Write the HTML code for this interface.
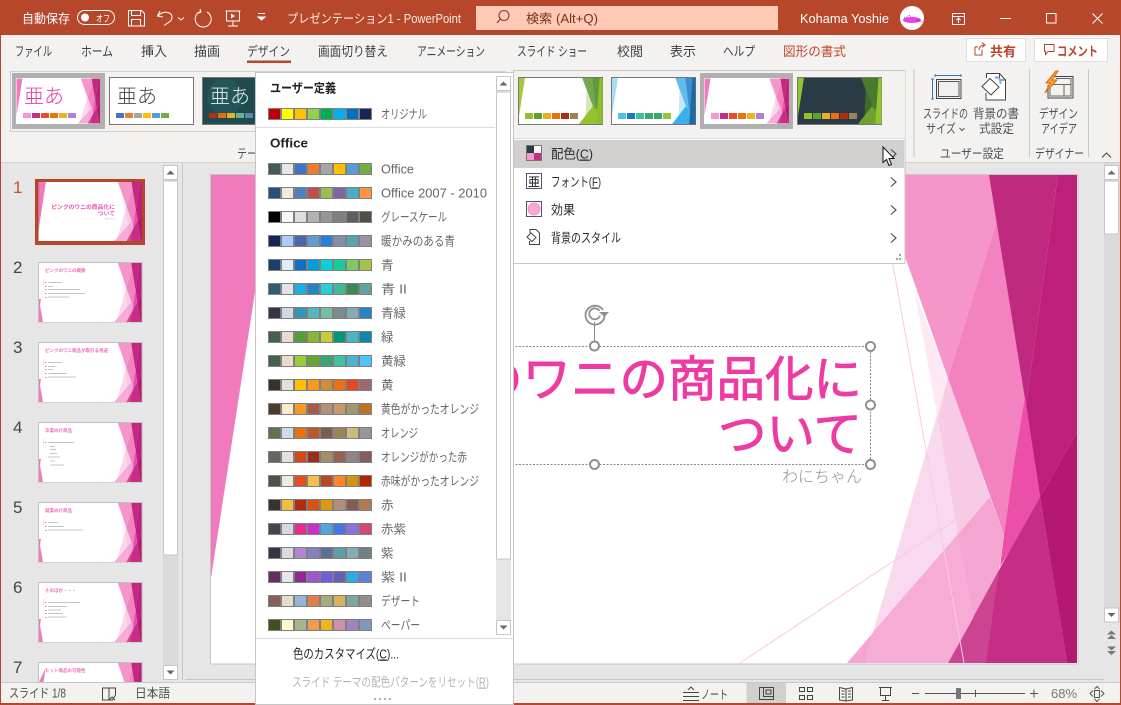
<!DOCTYPE html>
<html lang="ja">
<head>
<meta charset="utf-8">
<title>PowerPoint</title>
<style>
html,body{margin:0;padding:0;background:#E6E6E6;width:1121px;height:705px;overflow:hidden}
svg{display:block;font-family:"Liberation Sans","Noto Sans CJK JP",sans-serif}
.s rect{width:11px;height:10px}
.l{font-size:12.5px;fill:#666}
.w{font-size:12.5px;fill:#fff}
.tb{font-size:13px;fill:#404040}
.r{font-size:12.5px;fill:#505050}
.m{font-size:13px;fill:#2a2a2a}
.n{font-size:17px;fill:#444}
.i{fill:none;stroke:#444;stroke-width:1}
.wi{fill:none;stroke:#fff;stroke-width:1}
.g{fill:#fff;stroke:#c6c6c6}
</style>
</head>
<body>
<svg width="1121" height="705" viewBox="0 0 1121 705" xmlns="http://www.w3.org/2000/svg">
<defs>
<g id="d">
<rect x="211" y="175" width="866" height="488" fill="#fff"/>
<polygon points="211,175 273,175 211,578" fill="#F179BD"/>
<polygon points="915,293 948,378 938,420" fill="#FDE8F4"/>
<polygon points="948,378 990,497 873,632" fill="#F8D9EE"/>
<polygon points="948,378 990,497 958,534 938,420" fill="#F8CBE5"/>
<polygon points="876,175 989,175 997,220 948,378" fill="#F595CA"/>
<polygon points="997,220 1025,397 1022,420 1013,470 1004,535 948,378" fill="#F283C0"/>
<polygon points="1058,175 1077,175 1077,432 1040,497 1026,405" fill="#BE1F7A"/>
<polygon points="989,175 1058,175 1026,405" fill="#BF2A7E"/>
<polygon points="1025,397 1040,497 1010,550 1000,567 1004,535 1013,470" fill="#EC4FA8"/>
<polygon points="1040,497 1067,663 948,663 1010,550" fill="#C62D85"/>
<polygon points="1077,432 1077,663 1067,663 1040,497" fill="#B51871"/>
<polygon points="948,663 986,663 999,570" fill="#CB4391"/>
<polygon points="847,663 948,663 999,570 1004,535 990,497" fill="#F5A5D1"/>
<polygon points="864,663 873,632 958,534 973.500,617.500 948,663" fill="#F6ACD5"/>
<path d="M877 175L964 663M740 663L990 497" stroke="#F9C9E4" stroke-width="1" fill="none"/>
</g>
<g id="md">
<polygon points="0,0 62,0 0,403" style="fill:var(--s)"/>
<polygon points="655,0 866,0 866,488 623,488 765,300" style="fill:var(--l)"/>
<polygon points="700,130 765,300 690,400" style="fill:var(--p)"/>
<polygon points="760,0 866,0 866,210 800,340" style="fill:var(--d)"/>
<polygon points="623,488 866,488 866,210 800,340 765,300" style="fill:var(--e)"/>
<polygon points="835,0 866,0 866,488 800,488" style="fill:var(--f)"/>
</g>
</defs>

<!-- base -->
<rect width="1121" height="705" fill="#B7472A"/>
<rect x="1" y="35" width="1119" height="668" fill="#E6E6E6"/>

<!-- slide -->
<rect x="210.500" y="174.500" width="867.500" height="489.500" fill="#fff" stroke="#c6c6c6"/>
<use href="#d"/>
<text x="862" y="396" text-anchor="end" font-size="48.500" fill="#EE3BA3" stroke="#EE3BA3" stroke-width=".9">ピンクのワニの商品化に</text>
<text x="862" y="451" text-anchor="end" font-size="48.500" fill="#EE3BA3" stroke="#EE3BA3" stroke-width=".9">ついて</text>
<text x="862" y="482" text-anchor="end" font-size="16" font-weight="300" fill="#909090" textLength="80" lengthAdjust="spacingAndGlyphs">わにちゃん</text>
<!-- selection -->
<path d="M400 346.500H870.500V464.500H400" fill="none" stroke="#888" stroke-dasharray="2 1.500"/>
<path d="M594.500 322V341" stroke="#888"/>
<g fill="#fff" stroke="#8f8f8f" stroke-width="2">
<circle cx="594.500" cy="346" r="4.500"/><circle cx="870.500" cy="346.500" r="4.500"/><circle cx="870.500" cy="405" r="4.500"/><circle cx="594.500" cy="464.500" r="4.500"/><circle cx="870.500" cy="464.500" r="4.500"/>
</g>
<g fill="none" stroke="#8f8f8f" stroke-width="1.800"><path d="M603 310a9.500 9.500 0 1 0 1.500 6"/><path d="M599.500 311a5.500 5.500 0 1 0 .5 4.500"/></g>
<path d="M599 312h10l-4.500 5z" fill="#8f8f8f"/>

<!-- thumbnail pane -->
<rect x="35" y="179" width="110" height="66" fill="#B7472A"/>
<rect x="38.500" y="182" width="103.500" height="59" fill="#fff"/>
<use href="#d" transform="translate(38.500 182) scale(.1195 .1209) translate(-211 -175)"/>
<text x="115" y="209" text-anchor="end" font-size="5.800" font-weight="700" fill="#EF55AC">ピンクのワニの商品化に</text>
<text x="115" y="215.500" text-anchor="end" font-size="5.800" font-weight="700" fill="#EF55AC">ついて</text>
<text x="115" y="219.500" text-anchor="end" font-size="2" fill="#999">わにちゃん</text>
<text x="13" y="193" class="n" style="fill:#C8502E">1</text>

<g stroke="#c0c0c0" fill="#fff">
<rect x="38.500" y="262.500" width="103.500" height="59.500"/>
<rect x="38.500" y="342.500" width="103.500" height="59.500"/>
<rect x="38.500" y="422.500" width="103.500" height="59.500"/>
<rect x="38.500" y="502.500" width="103.500" height="59.500"/>
<rect x="38.500" y="582.500" width="103.500" height="59.500"/>
<rect x="38.500" y="662.500" width="103.500" height="59.500"/>
</g>
<use href="#d" transform="translate(39 263) scale(.1185 .1209) translate(-211 -175)"/>
<use href="#d" transform="translate(39 343) scale(.1185 .1209) translate(-211 -175)"/>
<use href="#d" transform="translate(39 423) scale(.1185 .1209) translate(-211 -175)"/>
<use href="#d" transform="translate(39 503) scale(.1185 .1209) translate(-211 -175)"/>
<use href="#d" transform="translate(39 583) scale(.1185 .1209) translate(-211 -175)"/>
<use href="#d" transform="translate(39 663) scale(.1185 .1209) translate(-211 -175)"/>
<g fill="#fff">
<polygon points="39,263 48,263 39,298"/>
<polygon points="39,343 48,343 39,378"/>
<polygon points="39,423 48,423 39,458"/>
<polygon points="39,503 48,503 39,538"/>
<polygon points="39,583 48,583 39,618"/>
<polygon points="39,663 48,663 39,682"/>
<rect x="39" y="263" width="4" height="36"/><rect x="39" y="343" width="4" height="36"/><rect x="39" y="423" width="4" height="36"/><rect x="39" y="503" width="4" height="36"/><rect x="39" y="583" width="4" height="36"/>
</g>
<g fill="#F179BD">
<polygon points="39,322 43,322 39,300"/><polygon points="39,402 43,402 39,380"/><polygon points="39,482 43,482 39,460"/><polygon points="39,562 43,562 39,540"/><polygon points="39,642 43,642 39,620"/>
</g>
<g font-size="4.500" font-weight="700" fill="#EF6DB8">
<text x="45" y="272">ピンクのワニの概要</text>
<text x="45" y="352">ピンクのワニ商品が取引る用途</text>
<text x="45" y="432">卒業向け商品</text>
<text x="45" y="512">就業向け商品</text>
<text x="45" y="592">そのほか・・・</text>
<text x="45" y="672">ヒット商品の可能性</text>
</g>
<g stroke="#c4c4ce" stroke-width="1">
<path d="M48 282.500h14M48 286.500h5M48 289.500h32M48 293.500h37M48 297h21"/>
<path d="M48 362.500h14M48 366.500h7M48 369.500h5M48 373.500h19M48 377h28"/>
<path d="M48 442.500h26M50 446.500h5M50 449.500h6M50 453.500h7M48 457h12M50 461h5M50 465h14"/>
<path d="M48 522.500h10M48 526.500h16M48 530h35"/>
<path d="M48 602.500h32M48 606.500h19M48 610h13M48 613.500h15M48 617h18"/>
</g>
<g fill="#EF6DB8"><rect x="45" y="282" width="1.500" height="1"/><rect x="45" y="286" width="1.500" height="1"/><rect x="45" y="289" width="1.500" height="1"/><rect x="45" y="293" width="1.500" height="1"/><rect x="45" y="297" width="1.500" height="1"/><rect x="45" y="362" width="1.500" height="1"/><rect x="45" y="366" width="1.500" height="1"/><rect x="45" y="369" width="1.500" height="1"/><rect x="45" y="373" width="1.500" height="1"/><rect x="45" y="377" width="1.500" height="1"/><rect x="45" y="442" width="1.500" height="1"/><rect x="45" y="522" width="1.500" height="1"/><rect x="45" y="526" width="1.500" height="1"/><rect x="45" y="530" width="1.500" height="1"/><rect x="45" y="602" width="1.500" height="1"/><rect x="45" y="606" width="1.500" height="1"/><rect x="45" y="610" width="1.500" height="1"/><rect x="45" y="613" width="1.500" height="1"/><rect x="45" y="617" width="1.500" height="1"/></g>
<text x="13" y="273" class="n">2</text><text x="13" y="353" class="n">3</text><text x="13" y="433" class="n">4</text><text x="13" y="513" class="n">5</text><text x="13" y="593" class="n">6</text><text x="13" y="673" class="n">7</text>

<!-- left scrollbar -->
<rect x="163" y="165" width="15" height="515" fill="#DADADA"/>
<rect x="163.500" y="165.500" width="14" height="14" class="g"/>
<rect x="163.500" y="181" width="14" height="374" class="g"/>
<rect x="163.500" y="665.500" width="14" height="14" class="g"/>
<path d="M166.500 174.500h8l-4-4z" fill="#666"/><path d="M166.500 670.500h8l-4 4z" fill="#666"/>
<path d="M182.500 163V680" stroke="#c6c6c6"/>
<path d="M185 679.500H1104" stroke="#c6c6c6"/>

<!-- right scrollbar -->
<rect x="1104" y="163" width="16" height="459" fill="#DADADA"/>
<rect x="1104.500" y="165.500" width="14" height="14" class="g"/>
<rect x="1104.500" y="181" width="14" height="53" class="g"/>
<rect x="1104.500" y="608" width="14" height="14" class="g"/>
<path d="M1107.500 174.500h8l-4-4z" fill="#666"/><path d="M1107.500 613h8l-4 4z" fill="#666"/>
<path d="M1107 634.500h9l-4.500-4zM1107 639h9l-4.500-4z" fill="#777"/>
<path d="M1107 646.500l4.500 4 4.500-4zM1107 651l4.500 4 4.500-4z" fill="#777"/>

<!-- ribbon -->
<rect x="1" y="35" width="1119" height="127" fill="#F3F2F1"/>
<path d="M1 162.500H1120" stroke="#d2d2d2"/>
<rect x="0" y="0" width="1121" height="35" fill="#B7472A"/>

<!-- title bar -->
<text x="22" y="23" class="w" textLength="48" lengthAdjust="spacingAndGlyphs">自動保存</text>
<rect x="77.500" y="10.500" width="37" height="14" rx="7" fill="none" stroke="#fff"/>
<circle cx="85" cy="17.500" r="4" fill="#fff"/>
<text x="96" y="22" font-size="9.500" fill="#fff" textLength="14" lengthAdjust="spacingAndGlyphs">オフ</text>
<g class="wi">
<path d="M128.500 10.500h13l3 3v12.500h-16zM131.500 10.500v5h9v-5M131.500 26v-6.500h9v6.500"/>
<path d="M160 11l-2.500 5 5.500 1M158 16.500C161 10.500 172 11 172 17c0 4-4 6-8 8.500"/>
<path d="M207 12a8 8 0 1 1-6.500-.5M200 9l1 3-3 1"/>
<path d="M225.500 11h15M226.500 11v10h13V11M233 21v5M228 26h10"/>
</g>
<path d="M231 13.500l4 2.500-4 2.500z" fill="#fff"/>
<path d="M178 17.500l3 2.500 3-2.500" class="wi"/>
<path d="M258 13.500h7M258 17l3.500 3 3.500-3z" fill="#fff" stroke="#fff" stroke-width="1"/>
<text x="287" y="23" class="w" textLength="174" lengthAdjust="spacingAndGlyphs" style="fill:#FBEAE4">プレゼンテーション1  -  PowerPoint</text>
<rect x="476" y="6" width="302" height="24" fill="#FFC9B5"/>
<circle cx="504" cy="15.500" r="5" fill="none" stroke="#8A3A20" stroke-width="1.100"/>
<path d="M500.500 19l-3.500 4" stroke="#8A3A20" stroke-width="1.200"/>
<text x="526" y="23" font-size="12.500" fill="#7B3019" textLength="72" lengthAdjust="spacingAndGlyphs">検索 (Alt+Q)</text>
<text x="800" y="23" class="w" textLength="89" lengthAdjust="spacingAndGlyphs">Kohama Yoshie</text>
<circle cx="912" cy="18" r="12" fill="#fff"/>
<ellipse cx="912" cy="20" rx="9" ry="3" fill="#F03CE8"/>
<path d="M904 18l3-1 2-2 2 2M917 20l6 2" stroke="#333" stroke-width=".7" stroke-dasharray="1 1" fill="none"/>
<g class="wi">
<rect x="952.500" y="13.500" width="12" height="11"/><path d="M952.500 16.500h12M958.500 23v-5M956.500 20l2-2 2 2"/>
<path d="M1000 18.500h11"/>
<rect x="1046.500" y="13.500" width="9.500" height="9.500"/>
<path d="M1092.500 13.500l10 10M1102.500 13.500l-10 10"/>
</g>

<!-- tabs -->
<g>
<text x="15" y="56" class="tb" textLength="37" lengthAdjust="spacingAndGlyphs">ファイル</text>
<text x="81" y="56" class="tb" textLength="32" lengthAdjust="spacingAndGlyphs">ホーム</text>
<text x="141" y="56" class="tb" textLength="26" lengthAdjust="spacingAndGlyphs">挿入</text>
<text x="194" y="56" class="tb" textLength="26" lengthAdjust="spacingAndGlyphs">描画</text>
<text x="247" y="56" class="tb" textLength="43" lengthAdjust="spacingAndGlyphs">デザイン</text>
<text x="318" y="56" class="tb" textLength="70" lengthAdjust="spacingAndGlyphs">画面切り替え</text>
<text x="417" y="56" class="tb" textLength="68" lengthAdjust="spacingAndGlyphs">アニメーション</text>
<text x="517" y="56" class="tb" textLength="70" lengthAdjust="spacingAndGlyphs">スライド ショー</text>
<text x="617" y="56" class="tb" textLength="26" lengthAdjust="spacingAndGlyphs">校閲</text>
<text x="670" y="56" class="tb" textLength="26" lengthAdjust="spacingAndGlyphs">表示</text>
<text x="723" y="56" class="tb" textLength="32" lengthAdjust="spacingAndGlyphs">ヘルプ</text>
<text x="783" y="56" class="tb" style="fill:#C0492C" textLength="63" lengthAdjust="spacingAndGlyphs">図形の書式</text>
</g>
<rect x="247" y="60.500" width="44" height="2.500" fill="#B7472A"/>
<rect x="966.500" y="38.500" width="59" height="23" fill="#fff" stroke="#E1DFDD"/>
<rect x="1034.500" y="38.500" width="73" height="23" fill="#fff" stroke="#E1DFDD"/>
<path d="M982 49.500v5.500h-7v-8h3M979 50c0-3 2-5 5-5M982 42.500l3 2.500-3 2.500" fill="none" stroke="#B7472A"/>
<path d="M1044.500 44.500h9.500v7h-6l-2.500 3v-3h-1z" fill="none" stroke="#B7472A"/>
<text x="990" y="56" font-size="13" font-weight="700" fill="#B7472A" textLength="26" lengthAdjust="spacingAndGlyphs">共有</text>
<text x="1057" y="56" font-size="13" font-weight="700" fill="#B7472A" textLength="41" lengthAdjust="spacingAndGlyphs">コメント</text>

<!-- gallery left -->
<path d="M10.500 131.500V71.500H506" fill="none" stroke="#d0d0d0"/><path d="M10.500 131.500H256" stroke="#d0d0d0"/>
<rect x="12" y="73" width="93" height="56" fill="#B0B0B0"/>
<rect x="16" y="78" width="84" height="46" fill="#fff"/>
<use href="#d" transform="translate(16.500 78.500) scale(.0965 .0922) translate(-211 -175)"/>
<text x="24" y="103" font-size="20" font-weight="300" fill="#EE3BA3">亜あ</text>
<g transform="translate(23 113)"><rect width="8" height="5" fill="#F598CE"/><rect x="9" width="8" height="5" fill="#C2307E"/><rect x="18" width="8" height="5" fill="#E84E2B"/><rect x="27" width="8" height="5" fill="#E8750F"/><rect x="36" width="8" height="5" fill="#E9B323"/><rect x="45" width="8" height="5" fill="#B180D0"/></g>
<rect x="109.500" y="77.500" width="84" height="47" fill="#fff" stroke="#777"/>
<text x="117" y="103" font-size="20" font-weight="300" fill="#444">亜あ</text>
<g transform="translate(116 113)"><rect width="8" height="5" fill="#4472C4"/><rect x="9" width="8" height="5" fill="#ED7D31"/><rect x="18" width="8" height="5" fill="#A5A5A5"/><rect x="27" width="8" height="5" fill="#FFC000"/><rect x="36" width="8" height="5" fill="#5B9BD5"/><rect x="45" width="8" height="5" fill="#70AD47"/></g>
<rect x="202.500" y="77.500" width="60" height="47" fill="#1F4A50" stroke="#777"/>
<circle cx="225" cy="97" r="18" fill="#24555A"/>
<text x="210" y="103" font-size="20" font-weight="300" fill="#E6EEEE">亜あ</text>
<g transform="translate(209 113)"><rect width="8" height="5" fill="#B53210"/><rect x="9" width="8" height="5" fill="#E07010"/><rect x="18" width="8" height="5" fill="#E8B020"/><rect x="27" width="8" height="5" fill="#70B090"/><rect x="36" width="8" height="5" fill="#5A8AA0"/></g>
<text x="237" y="158" class="r" textLength="30" lengthAdjust="spacingAndGlyphs">テーマ</text>

<!-- right ribbon groups -->
<path d="M914 69v88M1029.500 69v88M1088.500 69v88" stroke="#c8c8c8"/>
<path d="M935 75.500h26M935 74v3M961 74v3M932.500 79v20M931 79h3M931 99h3" stroke="#2B79C2" fill="none"/>
<rect x="936.500" y="79.500" width="24.500" height="19" fill="#F3F2F1" stroke="#444"/>
<rect x="938.500" y="81.500" width="20.500" height="15" fill="#F0F0F0" stroke="#555"/>
<path d="M986.500 78V73.500h13l6 6.500v20h-19.500V93" fill="#fff" stroke="#444"/><path d="M999.500 73.500v6.500h6" fill="none" stroke="#444"/>
<path d="M990 78.500l9 8.500-8 8-9-8.500z" fill="#fff" stroke="#444"/>
<path d="M995 78c3-2 6 1 5.500 6" fill="none" stroke="#7EAEE0" stroke-width="2"/>
<path d="M1054 76.500h19v21.500h-25V85" fill="none" stroke="#444"/><path d="M1056 78.500h15v17.500h-21V85" fill="none" stroke="#666"/><path d="M1051 84.500h20M1064 84.500v11.500" stroke="#666"/>
<path d="M1056 71l-10 12h4l-5 10 12-13h-5l6-9z" fill="#F9A23A" stroke="#DE6B0B"/>
<text x="923" y="118" class="r" textLength="45" lengthAdjust="spacingAndGlyphs">スライドの</text>
<text x="926" y="133" class="r" textLength="30" lengthAdjust="spacingAndGlyphs">サイズ</text>
<path d="M959.500 128l2.500 2.500 2.500-2.500" fill="none" stroke="#555"/>
<text x="973" y="118" class="r" textLength="46" lengthAdjust="spacingAndGlyphs">背景の書</text>
<text x="979" y="133" class="r" textLength="35" lengthAdjust="spacingAndGlyphs">式設定</text>
<text x="1039" y="118" class="r" textLength="39" lengthAdjust="spacingAndGlyphs">デザイン</text>
<text x="1041" y="133" class="r" textLength="36" lengthAdjust="spacingAndGlyphs">アイデア</text>
<text x="940" y="158" class="r" textLength="64" lengthAdjust="spacingAndGlyphs">ユーザー設定</text>
<text x="1035" y="158" class="r" textLength="49" lengthAdjust="spacingAndGlyphs">デザイナー</text>
<path d="M1102 157.500l4.500-4.500 4.500 4.500" fill="none" stroke="#444"/>

<!-- theme menu panel -->
<rect x="513.500" y="70.500" width="391.500" height="193" fill="#fff" stroke="#c6c6c6"/>
<rect x="514" y="71" width="391" height="67" fill="#F3F2F1"/>
<path d="M514 138.500H905" stroke="#dcdcdc"/>
<g style="--s:#A5C83C;--l:#74A64F;--p:#D8E4B8;--d:#5F9A3A;--e:#93C32F;--f:#8DBE30">
<rect x="518.500" y="77.500" width="84" height="47" fill="#fff" stroke="#777"/>
<use href="#md" transform="translate(519 78) scale(.0965 .0943)"/>
</g>
<g transform="translate(525 113)"><rect width="8" height="6" fill="#93C02F"/><rect x="9" width="8" height="6" fill="#5EA02C"/><rect x="18" width="8" height="6" fill="#E8B020"/><rect x="27" width="8" height="6" fill="#E87010"/><rect x="36" width="8" height="6" fill="#B02C10"/><rect x="45" width="8" height="6" fill="#9A8555"/></g>
<g style="--s:#A5DDF7;--l:#5FBCEC;--p:#C8E8F8;--d:#3A8FCC;--e:#3AB0E8;--f:#2468A0">
<rect x="611.500" y="77.500" width="84" height="47" fill="#fff" stroke="#777"/>
<use href="#md" transform="translate(612 78) scale(.0965 .0943)"/>
</g>
<g transform="translate(618 113)"><rect width="8" height="6" fill="#50BDEE"/><rect x="9" width="8" height="6" fill="#1E78C8"/><rect x="18" width="8" height="6" fill="#3CC0A0"/><rect x="27" width="8" height="6" fill="#3AA870"/><rect x="36" width="8" height="6" fill="#3AAA6C"/><rect x="45" width="8" height="6" fill="#93C83C"/></g>
<rect x="700" y="73" width="93" height="56" fill="#B0B0B0"/>
<rect x="704" y="78" width="85" height="46" fill="#fff"/>
<use href="#d" transform="translate(704.500 78.500) scale(.0975 .0922) translate(-211 -175)"/>
<g transform="translate(711 113)"><rect width="8" height="6" fill="#F598CE"/><rect x="9" width="8" height="6" fill="#C2307E"/><rect x="18" width="8" height="6" fill="#E84E2B"/><rect x="27" width="8" height="6" fill="#E8750F"/><rect x="36" width="8" height="6" fill="#E9B323"/><rect x="45" width="8" height="6" fill="#B180D0"/></g>
<g style="--s:#93C32F;--l:#4A7A2F;--p:#3F6A2A;--d:#4A7A30;--e:#6FA030;--f:#93C32F">
<rect x="797.500" y="77.500" width="84" height="47" fill="#2B3B45" stroke="#777"/>
<use href="#md" transform="translate(798 78) scale(.0965 .0943)"/>
</g>
<g transform="translate(804 113)"><rect width="8" height="6" fill="#93C02F"/><rect x="9" width="8" height="6" fill="#5EA02C"/><rect x="18" width="8" height="6" fill="#E8B020"/><rect x="27" width="8" height="6" fill="#E87010"/><rect x="36" width="8" height="6" fill="#B02C10"/><rect x="45" width="8" height="6" fill="#9A8555"/></g>

<rect x="514" y="140" width="390" height="28" fill="#D2D0CE"/>
<rect x="526.500" y="145.500" width="15" height="15" fill="#fff" stroke="#777"/>
<rect x="527" y="146" width="7" height="7" fill="#2B3B45"/><rect x="527" y="153" width="7" height="7" fill="#F598CE"/><rect x="534" y="153" width="7" height="7" fill="#C2307E"/>
<text x="551" y="158.500" class="m" textLength="42" lengthAdjust="spacingAndGlyphs">配色(<tspan text-decoration="underline">C</tspan>)</text>
<rect x="526.500" y="173.500" width="15" height="15" fill="#fff" stroke="#4A5570"/>
<text x="528" y="186" font-size="12" fill="#111">亜</text>
<text x="551" y="186.500" class="m" textLength="50" lengthAdjust="spacingAndGlyphs">フォント(<tspan text-decoration="underline">F</tspan>)</text>
<rect x="526.500" y="201.500" width="15" height="15" fill="#fff" stroke="#4A5570"/>
<circle cx="534" cy="209" r="6" fill="#F8A8D4" stroke="#F080C0" stroke-width=".8"/>
<text x="551" y="214.500" class="m" textLength="24" lengthAdjust="spacingAndGlyphs">効果</text>
<path d="M530 233V229.500h6l3.500 3.500v11.500h-10V241" fill="#fff" stroke="#444"/>
<path d="M531 233l5 4.500-4 4-5-4.500z" fill="#fff" stroke="#444"/>
<text x="551" y="242.500" class="m" textLength="70" lengthAdjust="spacingAndGlyphs">背景のスタイル</text>
<g fill="none" stroke="#444" stroke-width="1.100">
<path d="M891 149.500l5 4.500-5 4.500"/><path d="M891 177.500l5 4.500-5 4.500"/><path d="M891 205.500l5 4.500-5 4.500"/><path d="M891 233.500l5 4.500-5 4.500"/>
</g>
<g fill="#a0a0a0"><rect x="899" y="254" width="2" height="2"/><rect x="896" y="258" width="2" height="2"/><rect x="899" y="258" width="2" height="2"/></g>
<path d="M883 147v15.500l3.500-3 2.500 6 2.500-1-2.500-6h5z" fill="#fff" stroke="#111"/>

<!-- color dropdown -->
<rect x="255.500" y="72.500" width="258" height="632" fill="#fff" stroke="#c6c6c6"/>
<rect x="496" y="76" width="15" height="559" fill="#E6E6E6"/>
<rect x="496.500" y="76.500" width="14" height="14" class="g" stroke="#b5b5b5"/>
<rect x="496.500" y="92" width="14" height="467" class="g" stroke="#b5b5b5"/>
<rect x="496.500" y="620.500" width="14" height="14" class="g" stroke="#b5b5b5"/>
<path d="M499.500 85.500h8l-4-4z" fill="#666"/><path d="M499.500 625.500h8l-4 4z" fill="#666"/>
<path d="M256 127.500H495M256 638.500H513" stroke="#dcdcdc"/>
<text x="270" y="92.500" font-size="12.500" font-weight="700" fill="#222" textLength="66" lengthAdjust="spacingAndGlyphs">ユーザー定義</text>
<text x="270" y="147.500" font-size="13" font-weight="700" fill="#222" textLength="38" lengthAdjust="spacingAndGlyphs">Office</text>

<g fill="#808080">
<rect x="268" y="108" width="104" height="12"/><rect x="268" y="163" width="104" height="12"/><rect x="268" y="187" width="104" height="12"/><rect x="268" y="211" width="104" height="12"/><rect x="268" y="235" width="104" height="12"/><rect x="268" y="259" width="104" height="12"/><rect x="268" y="283" width="104" height="12"/><rect x="268" y="307" width="104" height="12"/><rect x="268" y="331" width="104" height="12"/><rect x="268" y="355" width="104" height="12"/><rect x="268" y="379" width="104" height="12"/><rect x="268" y="403" width="104" height="12"/><rect x="268" y="427" width="104" height="12"/><rect x="268" y="451" width="104" height="12"/><rect x="268" y="475" width="104" height="12"/><rect x="268" y="499" width="104" height="12"/><rect x="268" y="523" width="104" height="12"/><rect x="268" y="547" width="104" height="12"/><rect x="268" y="571" width="104" height="12"/><rect x="268" y="595" width="104" height="12"/><rect x="268" y="619" width="104" height="12"/>
</g>
<g class="s" transform="translate(269 109)"><rect fill="#C00000"/><rect x="13" fill="#FFFF00"/><rect x="26" fill="#FFC000"/><rect x="39" fill="#92D050"/><rect x="52" fill="#00B050"/><rect x="65" fill="#00B0F0"/><rect x="78" fill="#0070C0"/><rect x="91" fill="#172458"/></g>
<g class="s" transform="translate(269 164)"><rect fill="#465958"/><rect x="13" fill="#E7E6E6"/><rect x="26" fill="#4472C4"/><rect x="39" fill="#ED7D31"/><rect x="52" fill="#A5A5A5"/><rect x="65" fill="#FFC000"/><rect x="78" fill="#5B9BD5"/><rect x="91" fill="#70AD47"/></g>
<g class="s" transform="translate(269 188)"><rect fill="#2B4F7B"/><rect x="13" fill="#EEECE1"/><rect x="26" fill="#4F81BD"/><rect x="39" fill="#C0504D"/><rect x="52" fill="#9BBB59"/><rect x="65" fill="#8064A2"/><rect x="78" fill="#4BACC6"/><rect x="91" fill="#F79646"/></g>
<g class="s" transform="translate(269 212)"><rect fill="#000000"/><rect x="13" fill="#F8F8F8"/><rect x="26" fill="#DDDDDD"/><rect x="39" fill="#B2B2B2"/><rect x="52" fill="#969696"/><rect x="65" fill="#808080"/><rect x="78" fill="#5F5F5F"/><rect x="91" fill="#4F4F45"/></g>
<g class="s" transform="translate(269 236)"><rect fill="#172458"/><rect x="13" fill="#ACCBF9"/><rect x="26" fill="#4A66AC"/><rect x="39" fill="#629DD1"/><rect x="52" fill="#297FD5"/><rect x="65" fill="#7F8FA9"/><rect x="78" fill="#5AA2AE"/><rect x="91" fill="#9D90A0"/></g>
<g class="s" transform="translate(269 260)"><rect fill="#17406D"/><rect x="13" fill="#DBEFF9"/><rect x="26" fill="#0F6FC6"/><rect x="39" fill="#009DD9"/><rect x="52" fill="#0BD0D9"/><rect x="65" fill="#10CF9B"/><rect x="78" fill="#7CCA62"/><rect x="91" fill="#A5C249"/></g>
<g class="s" transform="translate(269 284)"><rect fill="#335B74"/><rect x="13" fill="#DFE3E5"/><rect x="26" fill="#1CADE4"/><rect x="39" fill="#2683C6"/><rect x="52" fill="#27CED7"/><rect x="65" fill="#42BA97"/><rect x="78" fill="#3E8853"/><rect x="91" fill="#62A39F"/></g>
<g class="s" transform="translate(269 308)"><rect fill="#373545"/><rect x="13" fill="#CEDBE6"/><rect x="26" fill="#3494BA"/><rect x="39" fill="#58B6C0"/><rect x="52" fill="#75BDA7"/><rect x="65" fill="#7A8C8E"/><rect x="78" fill="#84ACB6"/><rect x="91" fill="#2683C6"/></g>
<g class="s" transform="translate(269 332)"><rect fill="#455F51"/><rect x="13" fill="#E8DCCF"/><rect x="26" fill="#549E39"/><rect x="39" fill="#8AB833"/><rect x="52" fill="#C0CF3A"/><rect x="65" fill="#029676"/><rect x="78" fill="#4AB5C4"/><rect x="91" fill="#0989B1"/></g>
<g class="s" transform="translate(269 356)"><rect fill="#455F51"/><rect x="13" fill="#E8DCCF"/><rect x="26" fill="#99CB38"/><rect x="39" fill="#63A537"/><rect x="52" fill="#37A76F"/><rect x="65" fill="#44C1A3"/><rect x="78" fill="#4EB3CF"/><rect x="91" fill="#51C3F9"/></g>
<g class="s" transform="translate(269 380)"><rect fill="#39302A"/><rect x="13" fill="#E0DFD9"/><rect x="26" fill="#FFC000"/><rect x="39" fill="#F8991D"/><rect x="52" fill="#CE8D3E"/><rect x="65" fill="#EC7016"/><rect x="78" fill="#E64823"/><rect x="91" fill="#9C6A6A"/></g>
<g class="s" transform="translate(269 404)"><rect fill="#4E3B30"/><rect x="13" fill="#FBEAC9"/><rect x="26" fill="#F79A20"/><rect x="39" fill="#A65C4C"/><rect x="52" fill="#B29078"/><rect x="65" fill="#C99868"/><rect x="78" fill="#A39672"/><rect x="91" fill="#BD7229"/></g>
<g class="s" transform="translate(269 428)"><rect fill="#637052"/><rect x="13" fill="#CCDDEA"/><rect x="26" fill="#E8710F"/><rect x="39" fill="#B85A2C"/><rect x="52" fill="#7F5C52"/><rect x="65" fill="#9A8557"/><rect x="78" fill="#C9BC7E"/><rect x="91" fill="#969696"/></g>
<g class="s" transform="translate(269 452)"><rect fill="#696464"/><rect x="13" fill="#E2E2DC"/><rect x="26" fill="#D34817"/><rect x="39" fill="#9B2D1F"/><rect x="52" fill="#A28E6A"/><rect x="65" fill="#956251"/><rect x="78" fill="#918485"/><rect x="91" fill="#855D5D"/></g>
<g class="s" transform="translate(269 476)"><rect fill="#505046"/><rect x="13" fill="#EEECE1"/><rect x="26" fill="#E84C22"/><rect x="39" fill="#F3C14B"/><rect x="52" fill="#B64926"/><rect x="65" fill="#FF8427"/><rect x="78" fill="#D5940E"/><rect x="91" fill="#B22600"/></g>
<g class="s" transform="translate(269 500)"><rect fill="#39322F"/><rect x="13" fill="#F2BC42"/><rect x="26" fill="#B52A0D"/><rect x="39" fill="#D55316"/><rect x="52" fill="#DA9A10"/><rect x="65" fill="#B18E7B"/><rect x="78" fill="#835C52"/><rect x="91" fill="#B07B4E"/></g>
<g class="s" transform="translate(269 524)"><rect fill="#454551"/><rect x="13" fill="#D8D9DC"/><rect x="26" fill="#E32D91"/><rect x="39" fill="#C830CC"/><rect x="52" fill="#4EA6DC"/><rect x="65" fill="#4775E7"/><rect x="78" fill="#8971E1"/><rect x="91" fill="#D54773"/></g>
<g class="s" transform="translate(269 548)"><rect fill="#373545"/><rect x="13" fill="#DCD8DC"/><rect x="26" fill="#B385D0"/><rect x="39" fill="#8581BF"/><rect x="52" fill="#5D6E9A"/><rect x="65" fill="#5E9EAA"/><rect x="78" fill="#84ACB6"/><rect x="91" fill="#6F8183"/></g>
<g class="s" transform="translate(269 572)"><rect fill="#632E62"/><rect x="13" fill="#EAE5EB"/><rect x="26" fill="#92278F"/><rect x="39" fill="#9B57D3"/><rect x="52" fill="#755DD9"/><rect x="65" fill="#665EB8"/><rect x="78" fill="#2AABE2"/><rect x="91" fill="#5982DB"/></g>
<g class="s" transform="translate(269 596)"><rect fill="#83605A"/><rect x="13" fill="#E8DDCC"/><rect x="26" fill="#94B6D2"/><rect x="39" fill="#DD8047"/><rect x="52" fill="#A5AB81"/><rect x="65" fill="#D8B25C"/><rect x="78" fill="#7BA79D"/><rect x="91" fill="#968C8C"/></g>
<g class="s" transform="translate(269 620)"><rect fill="#444D26"/><rect x="13" fill="#FEFAC9"/><rect x="26" fill="#A9B68C"/><rect x="39" fill="#F19C4C"/><rect x="52" fill="#EEB422"/><rect x="65" fill="#CE8FA9"/><rect x="78" fill="#9E85BD"/><rect x="91" fill="#7F97BF"/></g>

<text x="381" y="118.500" class="l" textLength="46" lengthAdjust="spacingAndGlyphs">オリジナル</text>
<text x="381" y="173.500" class="l" textLength="33" lengthAdjust="spacingAndGlyphs">Office</text>
<text x="381" y="197.500" class="l" textLength="106" lengthAdjust="spacingAndGlyphs">Office 2007 - 2010</text>
<text x="381" y="221.500" class="l" textLength="66" lengthAdjust="spacingAndGlyphs">グレースケール</text>
<text x="381" y="245.500" class="l" textLength="74" lengthAdjust="spacingAndGlyphs">暖かみのある青</text>
<text x="381" y="269.500" class="l">青</text>
<text x="381" y="293.500" class="l" textLength="26" lengthAdjust="spacingAndGlyphs">青 II</text>
<text x="381" y="317.500" class="l" textLength="25" lengthAdjust="spacingAndGlyphs">青緑</text>
<text x="381" y="341.500" class="l">緑</text>
<text x="381" y="365.500" class="l" textLength="25" lengthAdjust="spacingAndGlyphs">黄緑</text>
<text x="381" y="389.500" class="l">黄</text>
<text x="381" y="413.500" class="l" textLength="98" lengthAdjust="spacingAndGlyphs">黄色がかったオレンジ</text>
<text x="381" y="437.500" class="l" textLength="37" lengthAdjust="spacingAndGlyphs">オレンジ</text>
<text x="381" y="461.500" class="l" textLength="86" lengthAdjust="spacingAndGlyphs">オレンジがかった赤</text>
<text x="381" y="485.500" class="l" textLength="98" lengthAdjust="spacingAndGlyphs">赤味がかったオレンジ</text>
<text x="381" y="509.500" class="l">赤</text>
<text x="381" y="533.500" class="l" textLength="25" lengthAdjust="spacingAndGlyphs">赤紫</text>
<text x="381" y="557.500" class="l">紫</text>
<text x="381" y="581.500" class="l" textLength="26" lengthAdjust="spacingAndGlyphs">紫 II</text>
<text x="381" y="605.500" class="l" textLength="39" lengthAdjust="spacingAndGlyphs">デザート</text>
<text x="381" y="629.500" class="l" textLength="39" lengthAdjust="spacingAndGlyphs">ペーパー</text>

<text x="293" y="658.500" font-size="13" fill="#222" textLength="106" lengthAdjust="spacingAndGlyphs">色のカスタマイズ(<tspan text-decoration="underline">C</tspan>)...</text>
<text x="292" y="686.500" font-size="12.500" fill="#b4b4b4" textLength="197" lengthAdjust="spacingAndGlyphs">スライド テーマの配色パターンをリセット(<tspan text-decoration="underline">R</tspan>)</text>
<g fill="#b0b0b0"><rect x="374" y="698" width="2" height="2"/><rect x="379" y="698" width="2" height="2"/><rect x="384" y="698" width="2" height="2"/><rect x="389" y="698" width="2" height="2"/></g>

<!-- status bar -->
<rect x="1" y="683" width="254" height="20" fill="#F3F2F1"/>
<rect x="514" y="683" width="606" height="20" fill="#F3F2F1"/>
<path d="M1 682.500H255M514 682.500H1120" stroke="#c8c8c8"/>
<rect x="0" y="703" width="255" height="2" fill="#B7472A"/><rect x="514" y="703" width="607" height="2" fill="#B7472A"/>
<text x="9" y="697.500" class="r" textLength="57" lengthAdjust="spacingAndGlyphs">スライド 1/8</text>
<path d="M102.500 688h13v7l-3 5h-10zM109 688v12M109 700l3-3 3 3" class="i" stroke="#555"/>
<text x="135" y="697.500" class="r" textLength="35" lengthAdjust="spacingAndGlyphs">日本語</text>
<rect x="746.500" y="683" width="39.500" height="20" fill="#D2D0CE"/>
<path d="M683 692.500h16M683 696.500h16M683 700.500h16M688 690l3-3 3 3" class="i" stroke="#555"/>
<text x="701" y="699" class="r" textLength="27" lengthAdjust="spacingAndGlyphs">ノート</text>
<g class="i" stroke="#555">
<rect x="759.500" y="687.500" width="14" height="12"/><path d="M763.500 687.500v9h10M766 690h5v4h-5z"/>
<rect x="799.500" y="687.500" width="5" height="4"/><rect x="807.500" y="687.500" width="5" height="4"/><rect x="799.500" y="695.500" width="5" height="4"/><rect x="807.500" y="695.500" width="5" height="4"/>
<path d="M839.500 687.500l6.500 1.500 6.500-1.500v12.500l-6.500 1-6.500-1zM846 689v12M841.500 691h3M841.500 694h3M841.500 697h3M848 691h3M848 694h3M848 697h3"/>
<path d="M879 687.500h13M880.500 687.500v8h10v-8M885.500 695.500v5M882 700.500h7"/>
</g>
<path d="M912 693.500h7M925 693.500h100M975.500 690v7M1030 693.500h8M1034 689.500v8" stroke="#555" fill="none"/>
<rect x="956" y="688" width="5" height="11" fill="#777"/>
<text x="1051" y="698" font-size="12.500" fill="#777" textLength="26" lengthAdjust="spacingAndGlyphs">68%</text>
<path d="M1093 690.500l-3 3 3 3M1101 690.500l3 3-3 3M1094.500 689l2.500-2.500 2.500 2.500M1094.500 699l2.500 2.500 2.500-2.500" fill="none" stroke="#555"/>
<rect x="1094.500" y="690.500" width="5" height="7" fill="none" stroke="#555"/>
</svg>
</body>
</html>
